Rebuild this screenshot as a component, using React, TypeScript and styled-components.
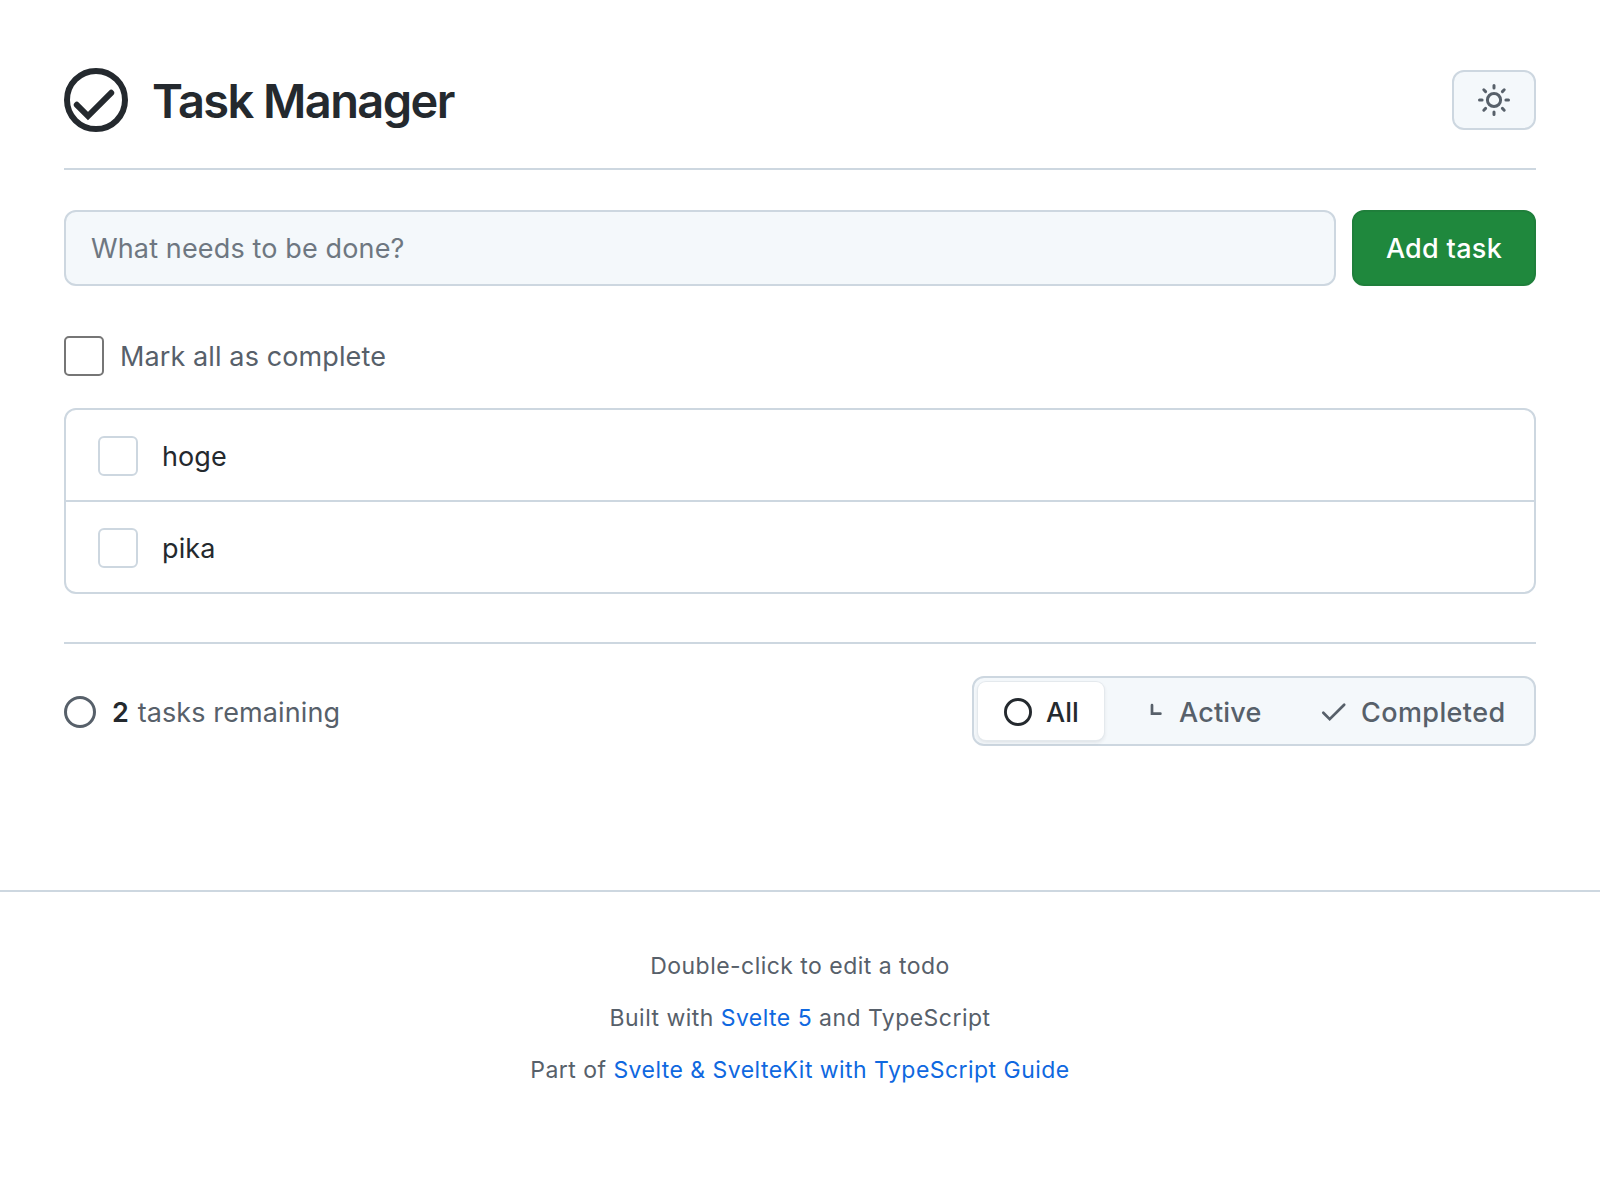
import React from "react";
import styled, { createGlobalStyle } from "styled-components";

const color = {
  text: "#24292e",
  muted: "#57606a",
  border: "#cdd7e0",
  subtle: "#f4f8fb",
  green: "#1f883d",
  link: "#0f68e0",
};

const GlobalStyle = createGlobalStyle`
  * { box-sizing: border-box; }
  body {
    margin: 0;
    background: #ffffff;
    color: ${color.text};
    font-family: Inter, "Liberation Sans", sans-serif;
    font-size: 27px;
    line-height: 40px;
    letter-spacing: 0.11px;
    -webkit-font-smoothing: antialiased;
  }
  button, input { font: inherit; margin: 0; }
`;

const Page = styled.div`
  min-height: 1200px;
  display: flex;
  flex-direction: column;
`;

const Main = styled.main`
  height: 890px;
  padding: 64px 64px 0;
`;

const Header = styled.header`
  height: 106px;
  display: flex;
  justify-content: space-between;
  align-items: flex-start;
  padding-top: 4px;
  border-bottom: 2px solid ${color.border};
`;

const Brand = styled.div`
  display: flex;
  align-items: flex-start;
  gap: 24px;
`;

const Title = styled.h1`
  margin: 0;
  padding-top: 1px;
  font-size: 47px;
  line-height: 64px;
  font-weight: 600;
  letter-spacing: -1.6px;
`;

const ThemeButton = styled.button`
  width: 84px;
  height: 60px;
  margin-top: 2px;
  display: grid;
  place-items: center;
  padding: 0;
  color: ${color.muted};
  background: ${color.subtle};
  border: 2px solid ${color.border};
  border-radius: 12px;
`;

const Form = styled.form`
  display: flex;
  gap: 16px;
  height: 76px;
  margin-top: 40px;
`;

const TaskInput = styled.input`
  flex: 1;
  min-width: 0;
  padding: 2px 24px 0 25px;
  color: ${color.text};
  background: ${color.subtle};
  border: 2px solid ${color.border};
  border-radius: 12px;
  letter-spacing: 0.14px;
  &::placeholder {
    color: #6e7781;
    opacity: 1;
  }
`;

const AddButton = styled.button`
  width: 184px;
  padding: 2px 0 0;
  color: #ffffff;
  background: ${color.green};
  border: 2px solid #1f7f3b;
  border-radius: 12px;
  font-weight: 500;
  letter-spacing: 0.3px;
`;

const ToggleAll = styled.label`
  display: flex;
  align-items: center;
  gap: 16px;
  margin-top: 50px;
  height: 40px;
  color: ${color.muted};
`;

const Label = styled.span`
  padding-top: 2px;
`;

const Checkbox = styled.input<{ $stroke: string; $radius: number }>`
  appearance: none;
  flex: none;
  width: 40px;
  height: 40px;
  background: #ffffff;
  border: 2px solid ${(p) => p.$stroke};
  border-radius: ${(p) => p.$radius}px;
`;

const List = styled.ul`
  list-style: none;
  margin: 32px 0 0;
  padding: 0;
  border: 2px solid ${color.border};
  border-radius: 12px;
`;

const Item = styled.li`
  display: flex;
  align-items: center;
  gap: 24px;
  height: 90px;
  padding: 2px 32px 0;
  & + & {
    height: 92px;
    border-top: 2px solid ${color.border};
  }
`;

const StatusBar = styled.section`
  display: flex;
  justify-content: space-between;
  margin-top: 48px;
  padding-top: 32px;
  border-top: 2px solid ${color.border};
`;

const Remaining = styled.div`
  display: flex;
  align-items: center;
  gap: 16px;
  height: 72px;
  color: ${color.muted};
  strong {
    margin-right: 1px;
    color: ${color.text};
    font-weight: 600;
  }
`;

const Filters = styled.nav`
  display: flex;
  gap: 7px;
  width: 564px;
  height: 70px;
  padding: 4px;
  background: ${color.subtle};
  border: 2px solid ${color.border};
  border-radius: 12px;
`;

const Filter = styled.button<{ $active?: boolean; $width: number; $tracking: number }>`
  width: ${(p) => p.$width}px;
  flex: none;
  display: flex;
  align-items: center;
  gap: 14px;
  padding: 4px 0 0 26px;
  border: 0;
  border-radius: 8px;
  font-weight: 500;
  letter-spacing: ${(p) => p.$tracking}px;
  white-space: nowrap;
  color: ${(p) => (p.$active ? color.text : color.muted)};
  background: ${(p) => (p.$active ? "#ffffff" : "transparent")};
  box-shadow: ${(p) => (p.$active ? "0 0 0 1px #e4e9ed, 0 2px 4px rgba(31, 35, 40, 0.12)" : "none")};
  svg { margin-top: -2px; }
`;

const Footer = styled.footer`
  flex: 1;
  padding: 52px 0 0;
  border-top: 2px solid ${color.border};
  color: ${color.muted};
  font-size: 23px;
  letter-spacing: 0.46px;
  text-align: center;
`;

const FooterLine = styled.p`
  margin: 0 0 12px;
  padding-top: 5px;
  line-height: 35px;
`;

const Link = styled.a`
  color: ${color.link};
  text-decoration: none;
`;

const Icon = styled.svg`
  display: block;
  flex: none;
  fill: none;
  stroke: currentColor;
  overflow: visible;
`;

const LogoIcon = () => (
  <Icon width="64" height="64" viewBox="0 0 64 64">
    <circle cx="32" cy="32" r="29" strokeWidth="6" />
    <path d="M12.8 36.8 24 48 47.2 24.8" strokeWidth="6" strokeLinecap="round" />
  </Icon>
);

const SunIcon = () => (
  <Icon width="32" height="32" viewBox="0 0 32 32" strokeLinecap="round">
    <circle cx="16" cy="16" r="6.6" strokeWidth="3" />
    <path
      strokeWidth="3"
      d="M16 1.5v2.6M16 27.9v2.6M1.5 16h2.6M27.9 16h2.6M5.8 5.8l1.8 1.8M24.4 24.4l1.8 1.8M26.2 5.8l-1.8 1.8M7.6 24.4l-1.8 1.8"
    />
  </Icon>
);

const CircleIcon = ({ size, stroke }: { size: number; stroke: number }) => (
  <Icon width={size} height={size} viewBox={`0 0 ${size} ${size}`}>
    <circle cx={size / 2} cy={size / 2} r={(size - stroke) / 2} strokeWidth={stroke} />
  </Icon>
);

const HandsIcon = () => (
  <Icon width="28" height="28" viewBox="0 0 28 28">
    <path d="M15 7.2v8.5h8.4" strokeWidth="2.7" strokeLinecap="round" />
  </Icon>
);

const CheckIcon = () => (
  <Icon width="28" height="28" viewBox="0 0 28 28">
    <path d="M4.3 14.8 10.7 21.2 25.2 6.7" strokeWidth="2.7" strokeLinecap="round" />
  </Icon>
);

const tasks = ["hoge", "pika"];

export default function App() {
  return (
    <Page>
      <GlobalStyle />
      <Main>
        <Header>
          <Brand>
            <LogoIcon />
            <Title>Task Manager</Title>
          </Brand>
          <ThemeButton type="button" aria-label="Toggle theme">
            <SunIcon />
          </ThemeButton>
        </Header>
        <Form onSubmit={(e) => e.preventDefault()}>
          <TaskInput placeholder="What needs to be done?" />
          <AddButton type="submit">Add task</AddButton>
        </Form>
        <ToggleAll>
          <Checkbox type="checkbox" $stroke="#767676" $radius={5} />
          <Label>Mark all as complete</Label>
        </ToggleAll>
        <List>
          {tasks.map((task) => (
            <Item key={task}>
              <Checkbox type="checkbox" $stroke={color.border} $radius={6} />
              <Label>{task}</Label>
            </Item>
          ))}
        </List>
        <StatusBar>
          <Remaining>
            <CircleIcon size={32} stroke={3} />
            <Label>
              <strong>2</strong> tasks remaining
            </Label>
          </Remaining>
          <Filters>
            <Filter type="button" $active $width={126} $tracking={0}>
              <CircleIcon size={28} stroke={2.9} />
              All
            </Filter>
            <Filter type="button" $width={175} $tracking={0.2}>
              <HandsIcon />
              Active
            </Filter>
            <Filter type="button" $width={236} $tracking={0.4}>
              <CheckIcon />
              Completed
            </Filter>
          </Filters>
        </StatusBar>
      </Main>
      <Footer>
        <FooterLine>Double-click to edit a todo</FooterLine>
        <FooterLine>
          Built with <Link href="#">Svelte 5</Link> and TypeScript
        </FooterLine>
        <FooterLine>
          Part of <Link href="#">Svelte &amp; SvelteKit with TypeScript Guide</Link>
        </FooterLine>
      </Footer>
    </Page>
  );
}
